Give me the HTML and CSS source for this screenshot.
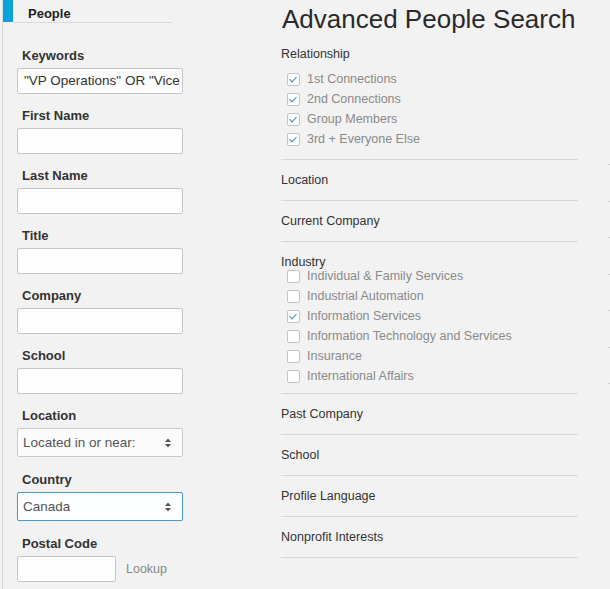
FILE: index.html
```html
<!DOCTYPE html>
<html lang="en">
<head>
  <meta charset="UTF-8" />
  <title>Advanced People Search</title>
  <link rel="stylesheet" href="styles.css">
</head>
<body>
  <div class="page">
    <div class="sidebar">
      <div class="tab-head">
        <div class="tab-mark"></div>
        <div class="tab-title">People</div>
      </div>

      <div class="form">
        <div class="field">
          <label>Keywords</label>
          <div class="input">"VP Operations" OR "Vice</div>
        </div>
        <div class="field">
          <label>First Name</label>
          <div class="input"></div>
        </div>
        <div class="field">
          <label>Last Name</label>
          <div class="input"></div>
        </div>
        <div class="field">
          <label>Title</label>
          <div class="input"></div>
        </div>
        <div class="field">
          <label>Company</label>
          <div class="input"></div>
        </div>
        <div class="field">
          <label>School</label>
          <div class="input"></div>
        </div>
        <div class="field">
          <label>Location</label>
          <div class="select">
            <span>Located in or near:</span>
            <svg width="8" height="12" viewBox="0 0 8 12"><path d="M4 1.5 L7 5 H1 Z M4 10.5 L7 7 H1 Z" fill="#555"/></svg>
          </div>
        </div>
        <div class="field">
          <label>Country</label>
          <div class="select focused">
            <span>Canada</span>
            <svg width="8" height="12" viewBox="0 0 8 12"><path d="M4 1.5 L7 5 H1 Z M4 10.5 L7 7 H1 Z" fill="#555"/></svg>
          </div>
        </div>
        <div class="field">
          <label>Postal Code</label>
          <div class="postal">
            <div class="input short"></div>
            <span class="lookup">Lookup</span>
          </div>
        </div>
      </div>
    </div>

    <div class="main">
      <h1>Advanced People Search</h1>

      <div class="facet relationship">
        <div class="facet-title">Relationship</div>
        <ul class="checks">
          <li><span class="box checked"></span>1st Connections</li>
          <li><span class="box checked"></span>2nd Connections</li>
          <li><span class="box checked"></span>Group Members</li>
          <li><span class="box checked"></span>3rd + Everyone Else</li>
        </ul>
      </div>

      <div class="facet"><div class="facet-title">Location</div></div>
      <div class="facet"><div class="facet-title">Current Company</div></div>

      <div class="facet industry">
        <div class="facet-title">Industry</div>
        <div class="scroll">
          <ul class="checks">
            <li><span class="box"></span>Individual &amp; Family Services</li>
            <li><span class="box"></span>Industrial Automation</li>
            <li><span class="box checked"></span>Information Services</li>
            <li><span class="box"></span>Information Technology and Services</li>
            <li><span class="box"></span>Insurance</li>
            <li><span class="box"></span>International Affairs</li>
          </ul>
        </div>
      </div>

      <div class="facet"><div class="facet-title">Past Company</div></div>
      <div class="facet"><div class="facet-title">School</div></div>
      <div class="facet"><div class="facet-title">Profile Language</div></div>
      <div class="facet"><div class="facet-title">Nonprofit Interests</div></div>
    </div>

    <!-- edge of the next column, just peeking in -->
    <div class="edge">
      <i></i><i></i><i></i><i></i><i></i><i></i><i></i>
    </div>
  </div>
</body>
</html>
```

FILE: styles.css
```css
body {
  margin: 0;
  background: #f2f2f2;
  font-family: "Liberation Sans", Arial, sans-serif;
  color: #333;
}
.page {
  display: flex;
  height: 589px;
  overflow: hidden;
}
.sidebar {
  margin-left: 2px;
  width: 200px;
  border-left: 1px solid #d8d8d8;
}
.tab-head {
  display: flex;
}
.tab-mark {
  width: 10px;
  height: 22px;
  background: #0aa2dd;
}
.tab-title {
  width: 159px;
  height: 23px;
  padding: 6px 0 0 15px;
  box-sizing: border-box;
  border-bottom: 1px solid #dadada;
  font-size: 13px;
  font-weight: bold;
  line-height: 16px;
  color: #222;
}
.form {
  padding: 25px 0 0 14px;
}
.field {
  margin-bottom: 14px;
}
.field label {
  display: block;
  padding-left: 5px;
  font-size: 13px;
  font-weight: bold;
  line-height: 16px;
  margin-bottom: 4px;
}
.input {
  width: 166px;
  height: 26px;
  box-sizing: border-box;
  background: #fdfdfd;
  border: 1px solid #c6c6c6;
  border-radius: 2px;
  padding: 0 6px;
  font-size: 13.5px;
  line-height: 24px;
  white-space: nowrap;
  overflow: hidden;
  color: #333;
}
.select {
  width: 166px;
  height: 29px;
  box-sizing: border-box;
  display: flex;
  align-items: center;
  justify-content: space-between;
  padding: 0 10px 0 5px;
  background: #fbfbfb;
  border: 1px solid #c9c9c9;
  border-radius: 2px;
  font-size: 13.5px;
  color: #555;
}
.select.focused {
  border-color: #4c98cf;
  background: #fcfdff;
  box-shadow: 0 0 1px #8cc1e6;
}
.field:has(.select) {
  margin-bottom: 15px;
}
.postal {
  display: flex;
  align-items: center;
}
.input.short {
  width: 99px;
  height: 26px;
}
.lookup {
  margin-left: 10px;
  font-size: 12.5px;
  color: #888;
}

.main {
  margin-left: 78px;
  width: 297px;
}
h1 {
  margin: 3px 0 0 1px;
  font-size: 26px;
  font-weight: normal;
  line-height: 32px;
  color: #2a2a2a;
  white-space: nowrap;
}
.facet {
  padding: 12px 0;
  border-bottom: 1px solid #d8d8d8;
}
.facet-title {
  font-size: 12.5px;
  line-height: 16px;
  color: #333;
}
.relationship {
  margin-top: 11px;
  padding: 0 0 10px;
}
.relationship .checks {
  margin-top: 7px;
}
.checks {
  list-style: none;
  margin: 0;
  padding: 0 0 0 6px;
}
.checks li {
  display: flex;
  align-items: center;
  height: 20px;
  font-size: 12.5px;
  color: #8a8a8a;
}
.box {
  width: 11px;
  height: 11px;
  margin-right: 7px;
  background: #fff;
  border: 1px solid #c4c4c4;
  border-radius: 2px;
  position: relative;
}
.box.checked::after {
  content: "";
  position: absolute;
  left: 3px;
  top: 1px;
  width: 3px;
  height: 6px;
  border: solid #3b8fd0;
  border-width: 0 1.5px 1.5px 0;
  transform: rotate(45deg);
}
.industry {
  padding-bottom: 7px;
}
.scroll {
  height: 116px;
  overflow: hidden;
}
.scroll .checks {
  margin-top: -4px;
}
.edge {
  margin-left: 30px;
  padding-top: 164px;
  display: flex;
  flex-direction: column;
  gap: 35.5px;
}
.edge i {
  display: block;
  width: 2px;
  height: 1px;
  background: #cfcfcf;
}
```
